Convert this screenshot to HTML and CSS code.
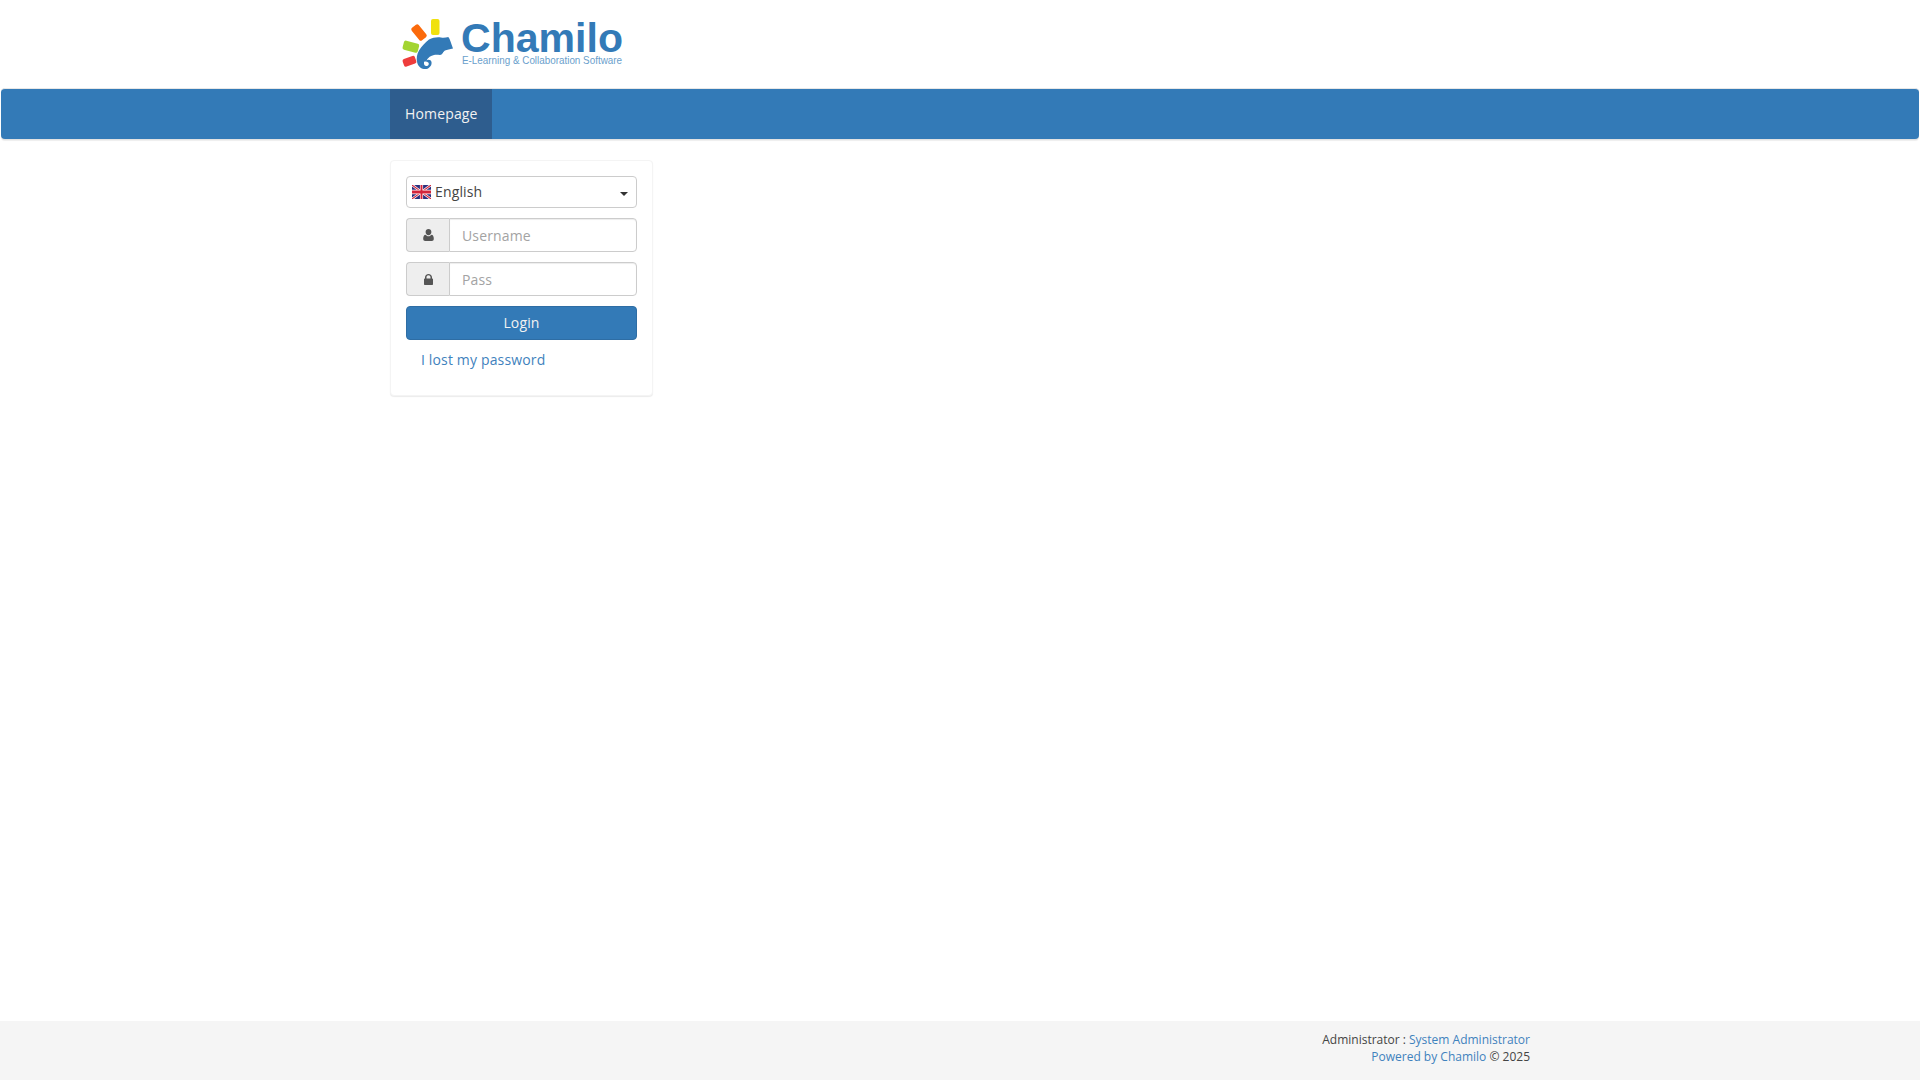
FILE: index.html
```html
<!DOCTYPE html>
<html lang="en">
<head>
<meta charset="utf-8">
<title>Chamilo</title>
<link rel="stylesheet" href="styles.css">
</head>
<body>
<div class="page">
  <header class="header">
    <div class="container">
      <svg class="logo" viewBox="400 14 230 56" width="230" height="56" role="img" aria-label="Chamilo">
        <rect x="431" y="19" width="8.500" height="16" rx="2" fill="#f0e10e"/>
        <rect x="411" y="28" width="16" height="9" rx="2" fill="#fb6a0b" transform="rotate(51 419 32.500)"/>
        <rect x="403" y="42" width="15.700" height="9.300" rx="2" fill="#a3d431" transform="rotate(15 410.800 46.700)"/>
        <rect x="403" y="57.300" width="13" height="8" rx="2" fill="#ee3d3c" transform="rotate(-20 409.500 61.300)"/>
        <path class="cham" fill-rule="evenodd" d="M429 39.500C433 37.500 437 37 441 37.500C444 38 446 37.500 448.300 37C450 39 451 43 453 48.500C450 49.500 447 49.500 445 50.500C443 51.500 442.500 55 440 55C438 55 436.500 54.500 434 55C431 55.500 428 57.500 426.500 60.500C428 59 431 59.500 431.500 62C432 65 430 67.500 427.500 68.800C423 70 418.500 67.500 417.300 63C416 58 417 54 419 50.500C421.500 46.500 425 42.500 429 39.500ZM424 62C423.500 64.500 425 66.500 427 66C428.800 65.500 429.300 63.500 428.300 62.500C426.800 61.300 425 61.300 424 62Z"/>
        <text class="logo-name" x="461" y="52" textLength="162" lengthAdjust="spacingAndGlyphs">Chamilo</text>
        <text class="logo-tag" x="462" y="64" textLength="160" lengthAdjust="spacingAndGlyphs">E-Learning &amp; Collaboration Software</text>
      </svg>
    </div>
  </header>
  <nav class="navbar">
    <div class="container">
      <a class="nav-item" href="#">Homepage</a>
    </div>
  </nav>
  <main class="container main">
    <aside class="panel">
      <div class="lang">
        <svg class="flag" viewBox="0 0 60 30" width="19" height="14" preserveAspectRatio="none">
          <rect width="60" height="30" fill="#2b2f7d"/>
          <path d="M0 0L60 30M60 0L0 30" stroke="#fff" stroke-width="6"/>
          <path d="M0 0L60 30M60 0L0 30" stroke="#d3243a" stroke-width="2.500"/>
          <path d="M30 0V30M0 15H60" stroke="#fff" stroke-width="10"/>
          <path d="M30 0V30M0 15H60" stroke="#d3243a" stroke-width="6"/>
        </svg>
        <span class="lang-name">English</span>
        <span class="caret"></span>
      </div>
      <div class="group">
        <span class="addon">
          <svg viewBox="0 0 11 12" width="11" height="12"><path fill="#555" d="M5.500 0C7.200 0 8.400 1.300 8.400 3C8.400 4.700 7.200 6.300 5.500 6.300C3.800 6.300 2.600 4.700 2.600 3C2.600 1.300 3.800 0 5.500 0ZM2.500 5.700C3.300 6.600 4.300 7.200 5.500 7.200C6.700 7.200 7.700 6.600 8.500 5.700C10 5.900 10.800 7.200 10.800 9.800C10.800 11.200 10 12 8.800 12H2.200C1 12 0.200 11.200 0.200 9.800C0.200 7.200 1 5.900 2.500 5.700Z"/></svg>
        </span>
        <input class="field" type="text" placeholder="Username">
      </div>
      <div class="group">
        <span class="addon">
          <svg viewBox="0 0 9 11" width="9" height="11"><path fill="#555" d="M2.500 4.500H6.500V3.200C6.500 2.100 5.600 1.300 4.500 1.300C3.400 1.300 2.500 2.100 2.500 3.200ZM1 4.500V3.200C1 1.400 2.600 0 4.500 0C6.400 0 8 1.400 8 3.200V4.500H8.300C8.700 4.500 9 4.800 9 5.200V10.300C9 10.700 8.700 11 8.300 11H0.700C0.300 11 0 10.700 0 10.300V5.200C0 4.800 0.300 4.500 0.700 4.500Z"/></svg>
        </span>
        <input class="field" type="password" placeholder="Pass">
      </div>
      <button class="login" type="button">Login</button>
      <a class="lost" href="#">I lost my password</a>
    </aside>
  </main>
  <footer class="footer">
    <div class="container footer-text">
      <div>Administrator : <a href="#">System Administrator</a></div>
      <div><a href="#">Powered by Chamilo</a> © 2025</div>
    </div>
  </footer>
</div>
</body>
</html>
```
FILE: styles.css
```css
* { box-sizing: border-box; }
html, body { margin: 0; height: 100%; }
body {
  font-family: "Open Sans", sans-serif;
  font-size: 14px;
  line-height: 20px;
  letter-spacing: .15px;
  color: #444;
  background: #fff;
}
a { color: #3f82bd; text-decoration: none; }
.page { display: flex; flex-direction: column; min-height: 1080px; }
.container { width: 1170px; margin: 0 auto; padding: 0 15px; }
.header { height: 88px; }
.logo { display: block; margin: 14px 0 0 10px; overflow: visible; }
.cham { fill: #337ab7; }
.logo-name { font-family: "Liberation Sans", sans-serif; font-weight: 700; font-size: 40px; letter-spacing: 0; fill: #337ab7; }
.logo-tag { font-family: "Liberation Sans", sans-serif; font-size: 10.500px; letter-spacing: 0; fill: #6aa0cc; }
.navbar {
  height: 51px;
  margin: 0 1px;
  background: #337ab7;
  border-top: 1px solid #e7e7e7;
  border-radius: 4px;
  box-shadow: 0 1px 0 #e2e2e2, 0 2px 1px #eee;
}
.nav-item {
  display: block;
  width: 102px;
  height: 50px;
  padding: 15px;
  color: #f2f2f2;
  background: #2e5d8e;
}
.main { flex: 1; padding-top: 21px; }
.panel {
  width: 263px;
  height: 236px;
  padding: 15px;
  background: #fff;
  border: 1px solid #f4f4f4;
  border-radius: 4px;
  box-shadow: 0 1px 1px rgba(0, 0, 0, .08);
}
.lang {
  display: flex;
  align-items: center;
  height: 32px;
  padding: 0 5px;
  border: 1px solid #ccc;
  border-radius: 4px;
  margin-bottom: 10px;
}
.flag { display: block; flex: none; margin-right: 4px; }
.lang-name { flex: 1; }
.caret {
  width: 0;
  height: 0;
  margin: 4px 3px 0 0;
  border-top: 4px solid #333;
  border-left: 4px solid transparent;
  border-right: 4px solid transparent;
}
.group { display: flex; height: 34px; margin-bottom: 10px; }
.addon {
  display: flex;
  align-items: center;
  justify-content: center;
  flex: none;
  width: 43px;
  background: #eee;
  border: 1px solid #ccc;
  border-right: 0;
  border-radius: 4px 0 0 4px;
}
.field {
  flex: 1;
  min-width: 0;
  padding: 7px 12px 5px;
  font: 14px/20px "Open Sans", sans-serif;
  letter-spacing: .15px;
  color: #555;
  background: #fff;
  border: 1px solid #ccc;
  border-radius: 0 4px 4px 0;
  box-shadow: inset 0 1px 1px rgba(0, 0, 0, .075);
  outline: 0;
}
.field::placeholder { color: #a3a3a3; opacity: 1; }
.login {
  display: block;
  width: 100%;
  height: 34px;
  font: 14px/20px "Open Sans", sans-serif;
  letter-spacing: .15px;
  color: #f2f2f2;
  background: #337ab7;
  border: 1px solid #2e6da4;
  border-radius: 4px;
}
.lost { display: block; margin-top: 10px; padding-left: 15px; }
.footer { height: 59px; padding-top: 10px; background: #f5f5f5; font-size: 12px; line-height: 17px; letter-spacing: 0; }
.footer-text { text-align: right; }
```
